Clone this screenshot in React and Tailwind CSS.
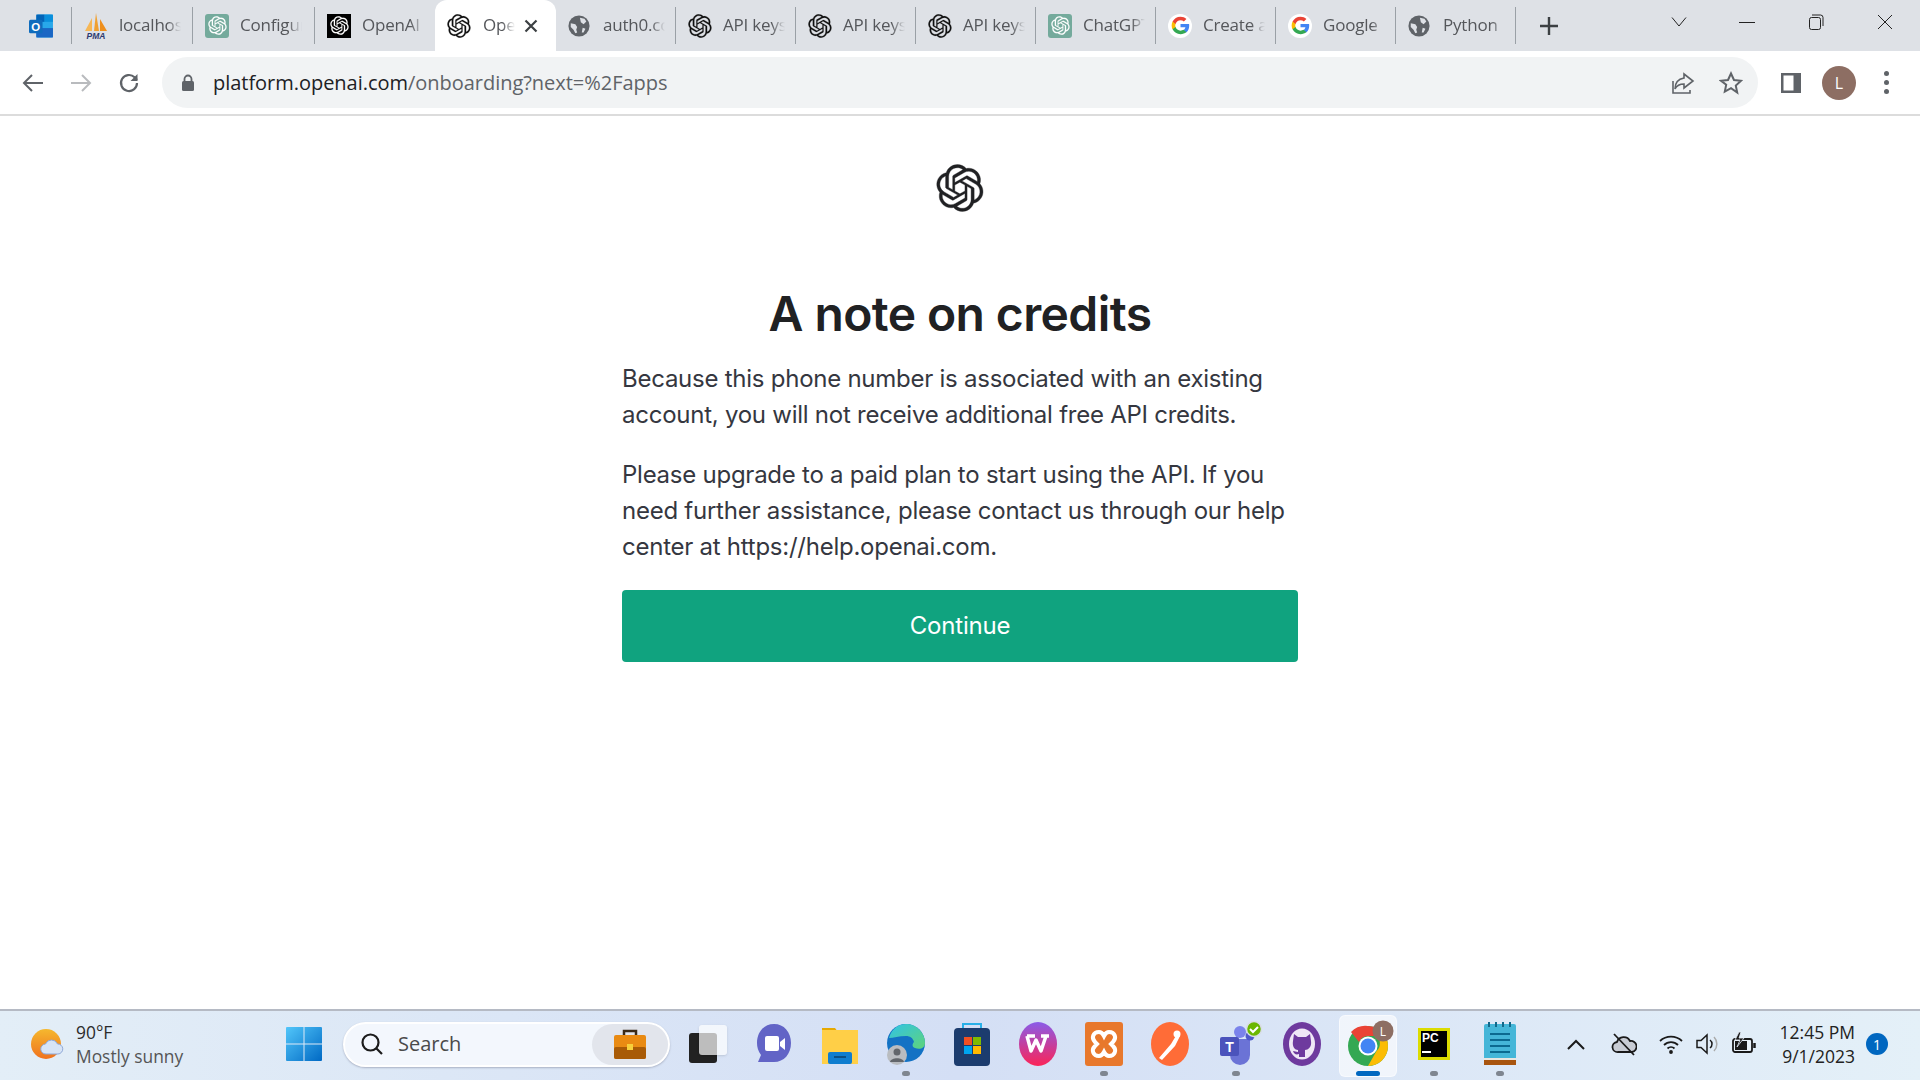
import React from "react";

const OPENAI_PATH =
  "M37.5324 16.8707C37.9808 15.5241 38.1363 14.0974 37.9886 12.6859C37.8409 11.2744 37.3934 9.91076 36.676 8.68622C35.6126 6.83404 33.9882 5.3676 32.0373 4.4985C30.0864 3.62941 27.9098 3.40259 25.8215 3.85078C24.8796 2.7893 23.7219 1.94125 22.4257 1.36341C21.1295 0.785575 19.7249 0.491269 18.3058 0.500197C16.1708 0.495044 14.0893 1.16803 12.3614 2.42214C10.6335 3.67624 9.34853 5.44666 8.6917 7.47815C7.30085 7.76286 5.98686 8.3414 4.8377 9.17505C3.68854 10.0087 2.73073 11.0782 2.02839 12.312C0.956464 14.1591 0.498905 16.2988 0.721698 18.4228C0.944492 20.5467 1.83612 22.5449 3.268 24.1293C2.81966 25.4759 2.66413 26.9026 2.81182 28.3141C2.95951 29.7256 3.40701 31.0892 4.12437 32.3138C5.18791 34.1659 6.8123 35.6322 8.76321 36.5013C10.7141 37.3704 12.8907 37.5973 14.9789 37.1492C15.9208 38.2107 17.0786 39.0587 18.3747 39.6366C19.6709 40.2144 21.0755 40.5087 22.4946 40.4998C24.6307 40.5054 26.7133 39.8321 28.4418 38.5772C30.1704 37.3223 31.4556 35.5506 32.1119 33.5179C33.5027 33.2332 34.8167 32.6547 35.9659 31.821C37.115 30.9874 38.0728 29.9178 38.7752 28.684C39.8458 26.8371 40.3023 24.6979 40.0789 22.5748C39.8556 20.4517 38.9639 18.4544 37.5324 16.8707ZM22.4978 37.8849C20.7443 37.8874 19.0459 37.2733 17.6994 36.1501C17.7601 36.117 17.8666 36.0586 17.936 36.0161L25.9004 31.4156C26.1003 31.3019 26.2663 31.137 26.3813 30.9378C26.4964 30.7386 26.5563 30.5124 26.5549 30.2825V19.0542L29.9213 20.998C29.9389 21.0068 29.9541 21.0198 29.9656 21.0359C29.977 21.052 29.9842 21.0707 29.9867 21.0902V30.3889C29.9842 32.375 29.1946 34.2791 27.7909 35.6841C26.3872 37.0892 24.4838 37.8806 22.4978 37.8849ZM6.39227 31.0064C5.51397 29.4888 5.19742 27.7107 5.49804 25.9832C5.55718 26.0187 5.66048 26.0818 5.73461 26.1244L13.699 30.7248C13.8975 30.8408 14.1233 30.902 14.3532 30.902C14.583 30.902 14.8088 30.8408 15.0073 30.7248L24.731 25.1103V28.9979C24.7321 29.0177 24.7283 29.0376 24.7199 29.0556C24.7115 29.0736 24.6988 29.0893 24.6829 29.1012L16.6317 33.7497C14.9096 34.7416 12.8643 35.0097 10.9447 34.4954C9.02506 33.9811 7.38785 32.7263 6.39227 31.0064ZM4.29707 13.6194C5.17156 12.0998 6.55279 10.9364 8.19885 10.3327C8.19885 10.4013 8.19491 10.5228 8.19491 10.6071V19.808C8.19351 20.0378 8.25334 20.2638 8.36823 20.4629C8.48312 20.6619 8.64893 20.8267 8.84863 20.9404L18.5723 26.5542L15.206 28.4979C15.1894 28.5089 15.1703 28.5155 15.1505 28.5173C15.1307 28.5191 15.1107 28.516 15.0924 28.5082L7.04046 23.8557C5.32135 22.8601 4.06716 21.2235 3.55289 19.3046C3.03862 17.3858 3.30624 15.3413 4.29707 13.6194ZM31.955 20.0556L22.2312 14.4411L25.5976 12.4981C25.6142 12.4872 25.6333 12.4805 25.6531 12.4787C25.6729 12.4769 25.6928 12.4801 25.7111 12.4879L33.7631 17.1364C34.9967 17.849 36.0017 18.8982 36.6606 20.1613C37.3194 21.4244 37.6047 22.849 37.4832 24.2684C37.3617 25.6878 36.8382 27.0432 35.9743 28.1759C35.1103 29.3086 33.9415 30.1717 32.6047 30.6641C32.6047 30.5947 32.6047 30.4733 32.6047 30.3889V21.188C32.6066 20.9586 32.5474 20.7328 32.4332 20.5338C32.319 20.3348 32.154 20.1698 31.955 20.0556ZM35.3055 15.0128C35.2464 14.9765 35.1431 14.9142 35.069 14.8717L27.1045 10.2712C26.906 10.1554 26.6803 10.0943 26.4504 10.0943C26.2206 10.0943 25.9948 10.1554 25.7963 10.2712L16.0726 15.8858V11.9982C16.0715 11.9783 16.0753 11.9585 16.0837 11.9405C16.0921 11.9225 16.1048 11.9068 16.1207 11.8949L24.1719 7.25025C25.4053 6.53903 26.8158 6.19376 28.2383 6.25482C29.6608 6.31589 31.0364 6.78077 32.2044 7.59508C33.3723 8.40939 34.2842 9.53945 34.8334 10.8531C35.3826 12.1667 35.5464 13.6095 35.3055 15.0128ZM14.2424 21.9419L10.8752 19.9981C10.8576 19.9893 10.8423 19.9763 10.8309 19.9602C10.8195 19.9441 10.8122 19.9254 10.8098 19.9058V10.6071C10.8107 9.18295 11.2173 7.78848 11.9819 6.58696C12.7466 5.38544 13.8377 4.42659 15.1275 3.82264C16.4173 3.21869 17.8524 2.99464 19.2649 3.1767C20.6775 3.35876 22.0089 3.93941 23.1034 4.85067C23.0427 4.88379 22.937 4.94215 22.8668 4.98473L14.9024 9.58517C14.7025 9.69878 14.5366 9.86356 14.4215 10.0626C14.3065 10.2616 14.2466 10.4877 14.2479 10.7175L14.2424 21.9419ZM16.071 17.9991L20.4018 15.4978L24.7325 17.9975V22.9985L20.4018 25.4983L16.071 22.9985V17.9991Z";

const Knot = ({ size = 24, className = "text-[#111]" }) => (
  <svg width={size} height={size} viewBox="0 0 41 41" fill="currentColor" className={className}>
    <path d={OPENAI_PATH} stroke="currentColor" strokeWidth="0.3" />
  </svg>
);

const KnotGreen = () => (
  <div className="w-6 h-6 rounded-[3px] bg-[#74aa9c] flex items-center justify-center">
    <Knot size={19} className="text-white" />
  </div>
);

const KnotBlack = () => (
  <div className="w-6 h-6 bg-black flex items-center justify-center">
    <Knot size={19} className="text-white" />
  </div>
);

const Globe = () => (
  <svg width="22" height="22" viewBox="0 0 24 24">
    <circle cx="12" cy="12" r="11.500" fill="#5f6368" />
    <path d="M3 9l5 1 2 3-1 3 1 3-2 1-2-4-3-3zM13 3l5 1 2 3-3 3-3-2zM16 14l3 1-2 4-2 0z" fill="#dee1e6" />
  </svg>
);

const GoogleG = () => (
  <div className="w-6 h-6 rounded-full bg-white flex items-center justify-center">
    <svg width="19" height="19" viewBox="0 0 48 48">
      <path fill="#4285F4" d="M46 24.5c0-1.6-.1-3.100-.4-4.500H24v8.600h12.400c-.5 2.800-2.100 5.200-4.500 6.800v5.600h7.200C43.400 37 46 31.300 46 24.500z" />
      <path fill="#34A853" d="M24 46c6 0 11.100-2 14.800-5.400l-7.200-5.600c-2 1.300-4.600 2.100-7.600 2.100-5.800 0-10.800-3.900-12.500-9.200H4v5.800C7.600 40.900 15.200 46 24 46z" />
      <path fill="#FBBC05" d="M11.500 27.900c-.9-2.600-.9-5.300 0-7.900v-5.800H4a22 22 0 000 19.500z" />
      <path fill="#EA4335" d="M24 10.900c3.300 0 6.200 1.100 8.500 3.300l6.400-6.400C35 4.200 30 2 24 2 15.200 2 7.600 7.100 4 14.200l7.500 5.800c1.700-5.200 6.700-9.100 12.500-9.100z" />
    </svg>
  </div>
);

const Outlook = () => (
  <svg width="25" height="26" viewBox="0 0 24 24">
    <rect x="7" y="1" width="16" height="22" rx="1.500" fill="#28a8ea" />
    <rect x="7" y="1" width="8" height="7" fill="#0364b8" />
    <rect x="15" y="1" width="8" height="7" fill="#0a8fdc" />
    <rect x="7" y="14" width="16" height="9" fill="#1a66c4" />
    <rect x="0" y="6" width="13" height="13" rx="1.500" fill="#0f6cbd" />
    <text x="6.500" y="16.500" textAnchor="middle" fontSize="11" fontWeight="700" fill="#fff" fontFamily="Liberation Sans, sans-serif">O</text>
  </svg>
);

const Pma = () => (
  <svg width="24" height="26" viewBox="0 0 24 26">
    <path d="M12 0l-2 18h5z" fill="#f0a030" />
    <path d="M8 5L1 18h7z" fill="#f6b756" />
    <path d="M16 6l7 12h-7z" fill="#ee8f1d" />
    <text x="12" y="25.500" textAnchor="middle" fontSize="8.500" fontWeight="700" fontStyle="italic" fill="#2e3a70" fontFamily="Liberation Sans, sans-serif">PMA</text>
  </svg>
);

const Sep = () => <div className="w-px h-[37px] bg-[#9aa0a6] shrink-0" />;

// tab label fades out at the right edge like chrome does
const Tab = ({ icon, label, w = "w-[119px]" }) => (
  <div className={`${w} h-full flex items-center shrink-0`}>
    <div className="w-[47px] pl-[12px] shrink-0 flex items-center">{icon}</div>
    <span className="w-[62px] pb-[2px] overflow-hidden whitespace-nowrap text-[17px] tracking-[-0.2px] text-[#55575b] [mask-image:linear-gradient(to_right,black_78%,transparent)]">
      {label}
    </span>
  </div>
);

const TabStrip = () => (
  <div className="h-[51px] bg-[#dee1e6] flex items-center shrink-0 font-['Open_Sans',sans-serif]">
    <div className="w-[71px] pl-[29px] shrink-0"><Outlook /></div>
    <Sep />
    <Tab icon={<Pma />} label="localhost" w="w-[120px]" />
    <Sep />
    <Tab icon={<KnotGreen />} label="Configure" w="w-[121px]" />
    <Sep />
    <Tab icon={<KnotBlack />} label="OpenAI" w="w-[120px]" />
    <div className="w-[121px] h-full self-end mt-[1px] bg-white rounded-t-[12px] flex items-center shrink-0">
      <div className="w-[48px] pl-[12px] shrink-0"><Knot size={24} /></div>
      <span className="w-[32px] pb-[2px] overflow-hidden whitespace-nowrap text-[17px] tracking-[-0.2px] text-[#55575b] [mask-image:linear-gradient(to_right,black_60%,transparent)]">OpenAI</span>
      <svg width="16" height="16" viewBox="0 0 16 16" className="ml-[8px]" stroke="#3c4043" strokeWidth="2.200">
        <path d="M2.500 2.500l11 11M13.500 2.500l-11 11" />
      </svg>
    </div>
    <Tab icon={<Globe />} label="auth0.com" w="w-[119px]" />
    <Sep />
    <Tab icon={<Knot />} label="API keys" />
    <Sep />
    <Tab icon={<Knot />} label="API keys" />
    <Sep />
    <Tab icon={<Knot />} label="API keys" />
    <Sep />
    <Tab icon={<KnotGreen />} label="ChatGPT" />
    <Sep />
    <Tab icon={<GoogleG />} label="Create a" />
    <Sep />
    <Tab icon={<GoogleG />} label="Google" />
    <Sep />
    <Tab icon={<Globe />} label="Python" />
    <Sep />
    <svg width="20" height="20" viewBox="0 0 20 20" className="ml-[23px] shrink-0" stroke="#3c4043" strokeWidth="2.400">
      <path d="M10 1v18M1 10h18" />
    </svg>
    <div className="flex-1" />
    <div className="h-full flex items-start pt-[16px] text-[#222]">
      <svg width="16" height="12" viewBox="0 0 16 12" fill="none" stroke="currentColor"><path d="M1 1.500l7 8.500 7-8.500" /></svg>
      <svg width="16" height="12" viewBox="0 0 16 12" fill="none" stroke="currentColor" className="ml-[52px]"><path d="M0 6.500h16" /></svg>
      <svg width="16" height="16" viewBox="0 0 16 16" fill="none" stroke="currentColor" className="ml-[53px] -mt-[2px]">
        <rect x="1.500" y="3.500" width="11" height="12" rx="2" />
        <path d="M4 1h8.500a2.500 2.500 0 012.500 2.500V12" />
      </svg>
      <svg width="16" height="16" viewBox="0 0 16 16" fill="none" stroke="currentColor" className="ml-[53px] mr-[27px] -mt-[2px]">
        <path d="M1 1l14 14M15 1L1 15" />
      </svg>
    </div>
  </div>
);

const Toolbar = () => (
  <div className="h-[65px] bg-white border-b-2 border-[#dcdcdc] flex items-center shrink-0 font-['Open_Sans',sans-serif]">
    <svg width="24" height="24" viewBox="0 0 24 24" fill="none" stroke="#5f6368" strokeWidth="2" className="ml-[21px] shrink-0">
      <path d="M22 12H3M11 4l-8 8 8 8" />
    </svg>
    <svg width="24" height="24" viewBox="0 0 24 24" fill="none" stroke="#b9bbbe" strokeWidth="2" className="ml-[24px] shrink-0">
      <path d="M2 12h19M13 4l8 8-8 8" />
    </svg>
    <svg width="24" height="24" viewBox="0 0 24 24" fill="none" stroke="#5f6368" strokeWidth="2.200" className="ml-[24px] shrink-0">
      <path d="M20 12a8 8 0 11-2.400-5.700L20 9" />
      <path d="M20.500 3v7h-7" fill="#5f6368" stroke="none" />
    </svg>
    <div className="ml-[21px] w-[1596px] h-[51px] rounded-full bg-[#f1f3f4] flex items-center shrink-0">
      <svg width="14" height="18" viewBox="0 0 14 18" className="ml-[19px] shrink-0">
        <path d="M3.500 7V5a3.500 3.500 0 017 0v2" fill="none" stroke="#5f6368" strokeWidth="1.800" />
        <rect x="1" y="7" width="12" height="10" rx="1.500" fill="#5f6368" />
      </svg>
      <span className="ml-[18px] text-[20px] tracking-[-0.03px] whitespace-nowrap text-[#5f6368]">
        <span className="text-[#202124]">platform.openai.com</span>/onboarding?next=%2Fapps
      </span>
      <div className="flex-1" />
      <svg width="24" height="24" viewBox="0 0 24 24" fill="none" stroke="#5f6368" strokeWidth="1.600" className="shrink-0">
        <path d="M13 3l9 7-9 7v-4c-4 0-7 1-9 5 0-6 3-10 9-11z" />
        <path d="M2 10v12h17v-3" />
      </svg>
      <svg width="24" height="24" viewBox="0 0 24 24" fill="none" stroke="#5f6368" strokeWidth="2" className="ml-[24px] mr-[15px] shrink-0">
        <path d="M12 2.500l3 6.500 7 .8-5.200 4.800 1.400 7L12 17.200l-6.200 3.400 1.400-7L2 9.800 9 9z" />
      </svg>
    </div>
    <svg width="22" height="22" viewBox="0 0 22 22" className="ml-[22px] shrink-0">
      <path d="M1 1h20v20H1z" fill="#5f6368" />
      <rect x="3.500" y="3.500" width="10" height="15" fill="#fff" />
    </svg>
    <div className="ml-[20px] w-[34px] h-[34px] rounded-full bg-[#8d6e63] flex items-center justify-center text-white text-[16px] shrink-0">L</div>
    <div className="ml-[28px] flex flex-col gap-[4px] shrink-0">
      <div className="w-[5px] h-[5px] rounded-full bg-[#5f6368]" />
      <div className="w-[5px] h-[5px] rounded-full bg-[#5f6368]" />
      <div className="w-[5px] h-[5px] rounded-full bg-[#5f6368]" />
    </div>
  </div>
);

const Onboarding = () => (
  <div className="flex-1 bg-white flex flex-col items-center font-['Inter',sans-serif] pt-[48px]">
    <Knot size={48} className="text-[#202123]" />
    <h1 className="mt-[73px] h-[58px] text-[48px] leading-[58px] font-semibold text-[#202123] tracking-[-0.6px]">A note on credits</h1>
    <div className="mt-[18px] w-[676px] text-[24px] leading-[36px] text-[#353740] tracking-[-0.25px]">
      <p>Because this phone number is associated with an existing account, you will not receive additional free API credits.</p>
      <p className="mt-[24px]">Please upgrade to a paid plan to start using the API. If you need further assistance, please contact us through our help center at https://help.openai.com.</p>
    </div>
    <button className="mt-[25px] w-[676px] h-[72px] rounded-[4px] bg-[#10a37f] text-white text-[24px] tracking-[-0.2px]">Continue</button>
  </div>
);

const Win = () => (
  <svg width="36" height="36" viewBox="0 0 36 36">
    <defs>
      <linearGradient id="win" x1="0" y1="0" x2="1" y2="1">
        <stop offset="0" stopColor="#52c6fa" />
        <stop offset="1" stopColor="#0069c4" />
      </linearGradient>
    </defs>
    <path d="M1 1h16.500v16.500H0V2a1 1 0 011-1zM18.500 1H35a1 1 0 011 1v15.500H18.500zM0 18.500h17.500V35H1a1 1 0 01-1-1zM18.500 18.500H36V34a1 1 0 01-1 1H18.500z" fill="url(#win)" />
  </svg>
);

const Dot = ({ on }) => (
  <div className={`absolute bottom-[1px] left-1/2 -translate-x-1/2 h-[5px] rounded-full ${on ? "w-[24px] bg-[#0067c0]" : "w-[8px] bg-[#7f8690]"}`} />
);

const App_ = ({ children, dot, active }) => (
  <div className="relative w-[66px] h-[66px] flex items-center justify-center shrink-0">
    {active && <div className="absolute left-[4px] right-[4px] top-[4px] bottom-0 rounded-[6px] bg-white/60 border border-white/50" />}
    <div className="relative">{children}</div>
    {dot && <Dot on={active} />}
  </div>
);

const Taskbar = () => (
  <div className="h-[71px] shrink-0 border-t-2 border-[#b5bac4] pb-[3px] bg-gradient-to-r from-[#e3eef7] via-[#d4dff5] to-[#e4f0f8] flex items-center font-['Open_Sans',sans-serif]">
    <svg width="34" height="34" viewBox="0 0 34 34" className="ml-[31px] shrink-0">
      <defs>
        <linearGradient id="sun" x1="0" y1="0" x2="0" y2="1">
          <stop offset="0" stopColor="#f5b82e" />
          <stop offset="1" stopColor="#f0721e" />
        </linearGradient>
      </defs>
      <circle cx="15" cy="17" r="15" fill="url(#sun)" />
      <path d="M15 27a5 5 0 01-.5-10 6.500 6.500 0 0112 0 5 5 0 01.5 10z" fill="#d7e4f6" stroke="#8ea8d8" strokeWidth="1" />
    </svg>
    <div className="ml-[11px] w-[116px] leading-[24px] text-[17.4px] text-[#2b2b2b] shrink-0">
      <div>90°F</div>
      <div className="text-[#555] whitespace-nowrap">Mostly sunny</div>
    </div>
    <div className="ml-[94px] shrink-0"><Win /></div>
    <div className="ml-[21px] w-[327px] h-[45px] rounded-full bg-[#f3f7fd] border-2 border-white shadow-[0_1px_2px_#a9b1c4] flex items-center shrink-0">
      <svg width="24" height="24" viewBox="0 0 24 24" fill="none" stroke="#1c1c1c" strokeWidth="2.200" className="ml-[15px] shrink-0">
        <circle cx="10.500" cy="10.500" r="8" />
        <path d="M16 16l6 6" />
      </svg>
      <span className="ml-[14px] text-[20px] text-[#4a4a4a]">Search</span>
      <div className="flex-1" />
      <div className="w-[76px] h-full rounded-full bg-[#e2e5ec] flex items-center justify-center">
        <svg width="34" height="32" viewBox="0 0 34 32">
          <path d="M11 8V3h12v5" fill="none" stroke="#3a2a18" strokeWidth="2.500" />
          <rect x="1" y="7" width="32" height="24" rx="2" fill="#e98a12" />
          <rect x="1" y="19" width="32" height="12" rx="2" fill="#a85a06" />
          <rect x="14" y="16" width="6" height="6" fill="#f7cf3a" />
        </svg>
      </div>
    </div>
    <div className="ml-[5px] flex shrink-0">
      <App_>
        <div className="relative w-[38px] h-[38px]">
          <div className="absolute left-0 bottom-0 w-[28px] h-[30px] bg-[#222] rounded-[3px]" />
          <div className="absolute right-0 top-0 w-[28px] h-[30px] bg-white/70 rounded-[3px] shadow-sm" />
        </div>
      </App_>
      <App_>
        <svg width="36" height="42" viewBox="0 0 36 42">
          <path d="M18 1c10 0 17 8 17 19s-7 19-17 19H2l3-7C2 28 1 24 1 20 1 9 8 1 18 1z" fill="#6264c6" />
          <rect x="9" y="13" width="14" height="15" rx="2" fill="#fff" />
          <path d="M24 19l5-4v12l-5-4z" fill="#fff" />
        </svg>
      </App_>
      <App_>
        <svg width="36" height="40" viewBox="0 0 36 40">
          <path d="M0 4h13l3 4h20v32H0z" fill="#e7a900" />
          <rect y="6" width="36" height="34" fill="#ffcf47" />
          <rect x="6" y="28" width="24" height="12" rx="2" fill="#0f7dcf" />
          <rect x="12" y="32" width="12" height="2" fill="#0a4f85" />
        </svg>
      </App_>
      <App_ dot>
        <svg width="38" height="44" viewBox="0 0 38 44">
          <defs>
            <linearGradient id="edge" x1="0" y1="0" x2="1" y2="1">
              <stop offset="0" stopColor="#31c3e6" />
              <stop offset="1" stopColor="#5fd47a" />
            </linearGradient>
          </defs>
          <circle cx="19" cy="21" r="19" fill="#1372c4" />
          <path d="M2 16C5 6 12 2 19 2c10 0 19 8 19 19 0 5-5 7-10 5-3-1-3-4-1-6-1-4-4-6-8-6-7 0-13 2-17 2z" fill="url(#edge)" />
          <circle cx="10" cy="33" r="10" fill="#b9bcc0" />
          <circle cx="10" cy="30" r="3.500" fill="#62666b" />
          <path d="M3 40c1-5 13-5 14 0z" fill="#62666b" />
        </svg>
      </App_>
      <App_>
        <svg width="36" height="44" viewBox="0 0 36 44">
          <path d="M9 8V2h18v6" fill="none" stroke="#29b0e8" strokeWidth="2" />
          <rect y="6" width="36" height="38" rx="4" fill="#1c3c6e" />
          <rect x="10" y="15" width="8" height="8" fill="#f25022" />
          <rect x="19" y="15" width="8" height="8" fill="#7fba00" />
          <rect x="10" y="24" width="8" height="8" fill="#00a4ef" />
          <rect x="19" y="24" width="8" height="8" fill="#ffb900" />
        </svg>
      </App_>
      <App_>
        <svg width="38" height="44" viewBox="0 0 38 44">
          <defs>
            <linearGradient id="wps" x1="0" y1="0" x2="0" y2="1">
              <stop offset="0" stopColor="#8a5ce8" />
              <stop offset="1" stopColor="#fb2458" />
            </linearGradient>
          </defs>
          <ellipse cx="19" cy="22" rx="19" ry="22" fill="url(#wps)" />
          <path d="M8 14l4 15 5-11 5 11 5-15M8 14h8M22 14h8" fill="none" stroke="#fff" strokeWidth="3.500" strokeLinejoin="round" />
        </svg>
      </App_>
      <App_ dot>
        <svg width="38" height="44" viewBox="0 0 38 44">
          <rect width="38" height="44" rx="3" fill="#e8782c" />
          <path d="M14 10c-6 0-8 6-4 10l2 2-2 2c-4 4-2 10 4 10 3 0 4-2 5-4 1 2 2 4 5 4 6 0 8-6 4-10l-2-2 2-2c4-4 2-10-4-10-3 0-4 2-5 4-1-2-2-4-5-4z" fill="none" stroke="#fff" strokeWidth="4" />
        </svg>
      </App_>
      <App_>
        <svg width="38" height="44" viewBox="0 0 38 44">
          <ellipse cx="19" cy="22" rx="19" ry="22" fill="#ff6c37" />
          <path d="M8 36l12-14 6-10 3 2-5 10-13 14z" fill="#fff" />
          <circle cx="26" cy="12" r="3.500" fill="#fff" />
        </svg>
      </App_>
      <App_ dot>
        <svg width="44" height="46" viewBox="0 0 44 46" className="translate-x-[4px]">
          <circle cx="22" cy="11" r="6" fill="#7b83eb" />
          <path d="M12 18h20v16a10 10 0 01-20 0z" fill="#6b73d6" />
          <circle cx="32" cy="15" r="4.500" fill="#5059c9" />
          <rect x="2" y="16" width="19" height="19" rx="2" fill="#4b53bc" />
          <text x="11.500" y="31" textAnchor="middle" fontSize="14" fontWeight="700" fill="#fff" fontFamily="Liberation Sans, sans-serif">T</text>
          <circle cx="36" cy="8" r="7.500" fill="#6bb700" stroke="#d9dde6" strokeWidth="1.500" />
          <path d="M32 8l3 3 5-5" fill="none" stroke="#fff" strokeWidth="2" />
        </svg>
      </App_>
      <App_>
        <svg width="38" height="44" viewBox="0 0 38 44">
          <ellipse cx="19" cy="22" rx="19" ry="22" fill="#6e3a9e" />
          <ellipse cx="19" cy="22" rx="13" ry="15.500" fill="#efe7f6" />
          <path d="M11 12l4 3h8l4-3 1 7c1 6-3 9-6 9v7h-6v-3c-3 1-5 0-6-3 2 0 3 1 5 1v-2c-3 0-6-3-5-9z" fill="#6e3a9e" />
        </svg>
      </App_>
      <App_ dot active>
        <svg width="48" height="48" viewBox="0 0 48 48" className="translate-x-[2px]">
          <circle cx="22" cy="26" r="20" fill="#34a853" />
          <path d="M22 6a20 20 0 0117.300 10H22a10 10 0 00-9 6L5 12A20 20 0 0122 6z" fill="#ea4335" />
          <path d="M39.300 16A20 20 0 0122 46l8.500-15a10 10 0 000-15z" fill="#fbbc04" />
          <circle cx="22" cy="26" r="9.500" fill="#fff" />
          <circle cx="22" cy="26" r="7.500" fill="#4285f4" />
          <circle cx="37" cy="11" r="10.500" fill="#8d6e63" />
          <text x="37" y="15.500" textAnchor="middle" fontSize="12" fill="#fff" fontFamily="Open Sans, sans-serif">L</text>
        </svg>
      </App_>
      <App_ dot>
        <div className="w-[32px] h-[32px] bg-black border-[3px] border-[#dcdc00] flex flex-col justify-between p-[1px]">
          <span className="text-[#fff] text-[12px] leading-[12px] font-bold font-['Liberation_Sans',sans-serif]">PC</span>
          <div className="w-[9px] h-[2px] bg-white mb-[3px]" />
        </div>
      </App_>
      <App_ dot>
        <svg width="32" height="44" viewBox="0 0 32 44">
          <rect y="2" width="32" height="36" rx="2" fill="#45b6d8" />
          <rect y="38" width="32" height="5" fill="#a8550f" />
          <rect y="36" width="32" height="2" fill="#e9e6e0" />
          <path d="M5 0v5M12 0v5M19 0v5M26 0v5" stroke="#12688a" strokeWidth="2" />
          <path d="M6 12h20M6 18h20M6 24h20M6 30h20" stroke="#0c6a90" strokeWidth="2" />
        </svg>
      </App_>
    </div>
    <div className="flex-1" />
    <div className="flex items-center text-[#1a1a1a] shrink-0">
      <svg width="18" height="11" viewBox="0 0 18 11" fill="none" stroke="currentColor" strokeWidth="2"><path d="M1 10l8-8 8 8" /></svg>
      <svg width="26" height="24" viewBox="0 0 26 24" fill="none" stroke="currentColor" strokeWidth="1.800" className="ml-[26px]">
        <path d="M7 20a5 5 0 01-1-10 7 7 0 0113-1 5.500 5.500 0 012 11z" fill="#c8ccd4" />
        <path d="M3 2l20 21" />
      </svg>
      <svg width="24" height="20" viewBox="0 0 24 20" fill="none" stroke="currentColor" strokeWidth="1.800" className="ml-[22px]">
        <path d="M1 7a16 16 0 0122 0M5 11a10 10 0 0114 0M8.500 14.500a5 5 0 017 0" />
        <circle cx="12" cy="18" r="1" fill="currentColor" />
      </svg>
      <svg width="24" height="22" viewBox="0 0 24 22" fill="none" stroke="currentColor" strokeWidth="1.500" className="ml-[13px]">
        <path d="M1 7.500h4l6-5.500v18l-6-5.500H1z" />
        <path d="M14 7a5 5 0 010 8" />
        <path d="M18 4a10 10 0 010 14" stroke="#aaa" />
      </svg>
      <svg width="26" height="24" viewBox="0 0 26 24" fill="none" strokeWidth="1.800" className="ml-[11px]">
        <rect x="2" y="7" width="19" height="13" rx="2" stroke="#1a1a1a" fill="#fff" fillOpacity="0.3" />
        <rect x="4" y="9" width="12" height="9" fill="#1a1a1a" />
        <path d="M23.500 11v5" stroke="#1a1a1a" strokeWidth="2.500" />
        <path d="M8 0L4 8h5l-3 7 7-9H8l2-6z" fill="#1a1a1a" stroke="#e6eef8" strokeWidth="0.800" />
      </svg>
      <div className="ml-[22px] w-[76px] text-right text-[17.5px] leading-[24px] text-[#222] whitespace-nowrap">
        <div>12:45 PM</div>
        <div>9/1/2023</div>
      </div>
      <div className="ml-[11px] mr-[32px] w-[22px] h-[22px] rounded-full bg-[#0067c0] text-white text-[14px] flex items-center justify-center">1</div>
    </div>
  </div>
);

export default function App() {
  return (
    <div className="w-[1920px] h-[1080px] flex flex-col overflow-hidden">
      <TabStrip />
      <Toolbar />
      <Onboarding />
      <Taskbar />
    </div>
  );
}
